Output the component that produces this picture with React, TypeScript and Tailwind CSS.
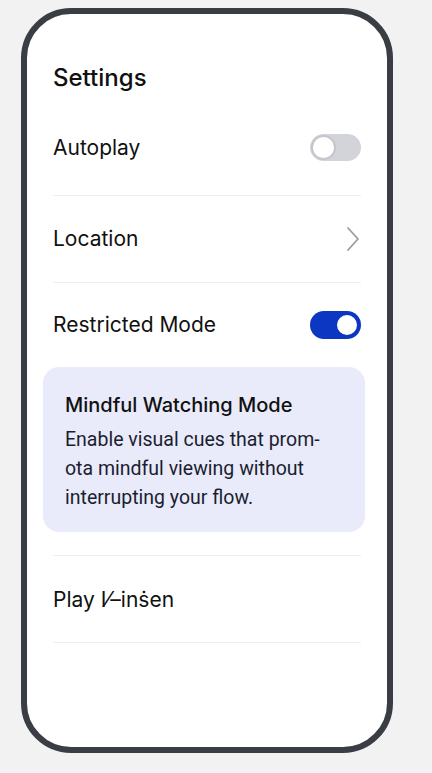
import React from "react";

function Toggle({ on }: { on: boolean }) {
  return on ? (
    <div className="flex h-[28px] w-[51px] items-center justify-end rounded-full bg-[#0b37c2] p-[2px]">
      <div className="h-[24px] w-[24px] rounded-full border-[2px] border-[#0b37c2] bg-white" />
    </div>
  ) : (
    <div className="flex h-[27px] w-[51px] items-center justify-start rounded-full bg-[#d2d4d9] p-[1px]">
      <div className="h-[25px] w-[25px] rounded-full border-[2px] border-[#c4c6cc] bg-white" />
    </div>
  );
}

function Chevron() {
  return (
    <svg width="14" height="26" viewBox="0 0 14 26" fill="none">
      <path d="M2 2 L12 13 L2 24" stroke="#9c9ca0" strokeWidth="1.8" strokeLinecap="round" strokeLinejoin="round" />
    </svg>
  );
}

export default function App() {
  return (
    <div
      className="min-h-[773px] w-full bg-[#f2f2f2] pl-[21px] pt-[8px]"
      style={{ fontFamily: "Inter, 'Noto Sans', sans-serif" }}
    >
      <div className="h-[745px] w-[372px] overflow-hidden rounded-[50px] border-[6px] border-[#3a3d44] bg-white">
        <div className="flex flex-col px-[26px]">
          <div className="flex h-[86px] items-end pb-[6px]">
            <h1 className="text-[24px] font-medium leading-[32px] text-[#111111]">Settings</h1>
          </div>
          <div className="flex h-[96px] items-center justify-between border-b border-[#eeeff3]">
            <span className="text-[21px] leading-[28px] text-[#111111]">Autoplay</span>
            <Toggle on={false} />
          </div>
          <div className="flex h-[87px] items-center justify-between border-b border-[#eeeff3]">
            <span className="text-[21px] leading-[28px] text-[#111111]">Location</span>
            <div className="mr-[1px]">
              <Chevron />
            </div>
          </div>
          <div className="flex h-[84px] items-center justify-between">
            <span className="text-[21px] leading-[28px] text-[#111111]">Restricted Mode</span>
            <Toggle on={true} />
          </div>
          <div className="-ml-[10px] -mr-[4px] h-[165px] rounded-[16px] bg-[#e9ebfa] px-[22px] pt-[24px]">
            <div className="text-[20px] font-medium leading-[28px] text-[#111111]">Mindful Watching Mode</div>
            <div
              className="mt-[6px] text-[19.5px] leading-[29px] text-[#1b1e30]"
              style={{ fontFamily: "Roboto, 'Noto Sans', sans-serif" }}
            >
              Enable visual cues that prom-
              <br />
              ota mindful viewing without
              <br />
              interrupting your flow.
            </div>
          </div>
          <div className="mt-[23px] flex h-[88px] items-center border-y border-[#eeeff3]">
            <span className="pt-[2px] text-[21px] leading-[28px] text-[#111111]">Play I⁄–inṡen</span>
          </div>
        </div>
      </div>
    </div>
  );
}
